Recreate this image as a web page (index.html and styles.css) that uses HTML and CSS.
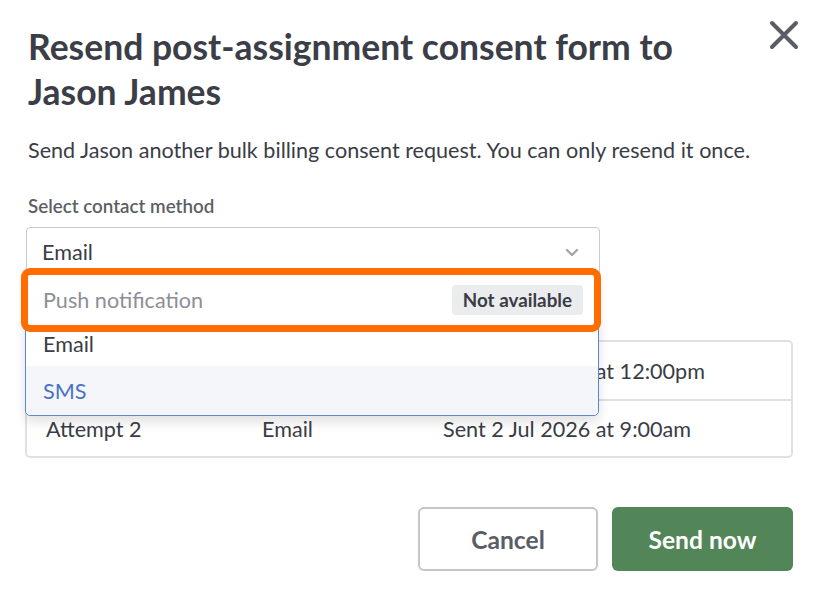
FILE: index.html
```html
<!DOCTYPE html>
<html lang="en">
<head>
    <meta charset="UTF-8">
    <title>Resend consent form</title>
    <link rel="stylesheet" href="styles.css">
</head>
<body>

    <!-- Modal -->
    <div class="modal">
        <div class="modal-header">
            <h1>Resend post-assignment consent form to Jason James</h1>
            <button class="close-btn" aria-label="Close">
                <svg width="30" height="30" viewBox="0 0 30 30">
                    <path d="M3 3 L27 27 M27 3 L3 27" stroke="#5a5d66" stroke-width="4" stroke-linecap="round"/>
                </svg>
            </button>
        </div>

        <p class="intro">Send Jason another bulk billing consent request. You can only resend it once.</p>

        <!-- Contact method -->
        <div class="field">
            <label class="field-label">Select contact method</label>
            <div class="select">
                <span>Email</span>
                <svg class="chevron" width="14" height="9" viewBox="0 0 14 9">
                    <path d="M2 2 L7 7 L12 2" fill="none" stroke="#a3a5aa" stroke-width="2.4" stroke-linecap="round" stroke-linejoin="round"/>
                </svg>
            </div>

            <div class="menu">
                <div class="option option-disabled highlighted">
                    <span>Push notification</span>
                    <span class="badge">Not available</span>
                </div>
                <div class="option option-email">Email</div>
                <div class="option option-active">SMS</div>
            </div>
        </div>

        <!-- Previous attempts -->
        <div class="attempts">
            <div class="attempt-row">
                <span>Attempt 1</span>
                <span>SMS</span>
                <span>Sent 1 Jul 2026 at 12:00pm</span>
            </div>
            <div class="attempt-row">
                <span>Attempt 2</span>
                <span>Email</span>
                <span>Sent 2 Jul 2026 at 9:00am</span>
            </div>
        </div>

        <div class="actions">
            <button class="btn btn-secondary">Cancel</button>
            <button class="btn btn-primary">Send now</button>
        </div>
    </div>

</body>
</html>
```

FILE: styles.css
```css
/* page */
body {
    margin: 0;
    background-color: #ffffff;
    font-family: Lato, "Liberation Sans", sans-serif;
    color: #3a3d45;
}

.modal {
    padding: 24px 31px 0 28px;
}

/* header */
.modal-header {
    display: flex;
    justify-content: space-between;
    align-items: flex-start;
}

.modal-header h1 {
    margin: 0;
    max-width: 700px;
    font-size: 35.5px;
    line-height: 45px;
    font-weight: 700;
    color: #3b3e47;
}

.close-btn {
    background: none;
    border: none;
    padding: 0;
    margin: -4px -6px 0 0;
    cursor: pointer;
}

.intro {
    margin: 22px 0 0;
    font-size: 21.6px;
    line-height: 28px;
}

/* select field */
.field {
    position: relative;
    width: 574px;
    margin: 31px 0 0 -2px;
}

.field-label {
    display: block;
    margin-left: 2px;
    font-size: 18.8px;
    font-weight: 600;
    color: #5c5f66;
    line-height: 22px;
}

.select {
    display: flex;
    justify-content: space-between;
    align-items: center;
    margin-top: 10px;
    height: 49px;
    padding: 0 20px 0 15px;
    border: 1px solid #c9cbcf;
    border-radius: 4px;
    font-size: 21.6px;
    box-sizing: border-box;
}

.chevron {
    margin-top: 2px;
}

/* dropdown menu */
.menu {
    position: absolute;
    top: 78px;
    left: -1px;
    right: 1px;
    background-color: #ffffff;
    border: 1px solid #5b86d6;
    border-radius: 0 0 5px 5px;
    box-shadow: 0 6px 12px rgba(0, 0, 0, 0.12);
    z-index: 2;
}

.option {
    display: flex;
    justify-content: space-between;
    align-items: center;
    padding: 0 17px;
    font-size: 21.6px;
}

.option-disabled {
    height: 52px;
    margin: 0 3px 0 1px;
    padding: 0 12px 0 16px;
    color: #8c8f96;
}

.option-email {
    height: 36px;
    padding-bottom: 4px;
    color: #3a3d45;
}

.option-active {
    height: 49px;
    color: #4a72c9;
    background-color: #f5f6f9;
    border-radius: 0 0 5px 5px;
}

.highlighted {
    outline: 7px solid #ff6d00;
    outline-offset: -1px;
    border-radius: 3px;
}

.badge {
    background-color: #ebecee;
    color: #3a3d45;
    font-size: 18.8px;
    font-weight: 700;
    line-height: 30px;
    padding: 0 11px;
    border-radius: 4px;
}

/* previous attempts table */
.attempts {
    margin: 64px 0 0 -3px;
    border: 2px solid #e0e1e3;
    border-radius: 5px;
}

.attempt-row {
    display: grid;
    grid-template-columns: 216px 181px 1fr;
    padding: 0 19px;
    height: 57px;
    align-items: center;
    font-size: 21.6px;
}

.attempt-row + .attempt-row {
    height: 55px;
    border-top: 2px solid #e0e1e3;
}

/* buttons */
.actions {
    display: flex;
    justify-content: flex-end;
    gap: 14px;
    margin-top: 49px;
}

.btn {
    width: 181px;
    height: 64px;
    border-radius: 6px;
    font-family: Lato, "Liberation Sans", sans-serif;
    font-size: 24.6px;
    font-weight: 700;
    cursor: pointer;
}

.btn-secondary {
    width: 180px;
    background-color: #ffffff;
    border: 2px solid #c3c5c9;
    color: #5a5d66;
}

.btn-primary {
    background-color: #528558;
    border: none;
    color: #ffffff;
}
```
